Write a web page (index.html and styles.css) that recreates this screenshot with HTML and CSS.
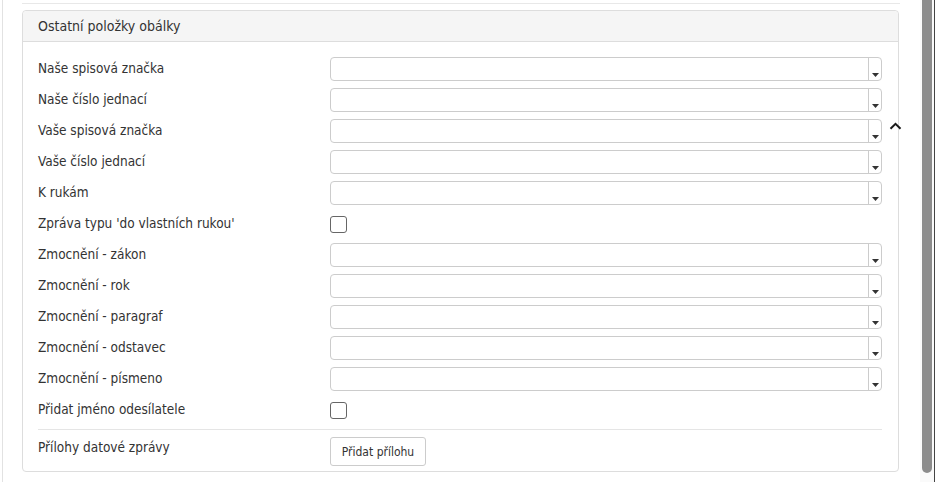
FILE: index.html
```html
<!DOCTYPE html>
<html lang="cs">
  <head>
    <meta charset="utf-8">
    <title>Ostatní položky obálky</title>
    <link rel="stylesheet" href="styles.css">
  </head>
  <body>
    <div class="page">
      <div class="content">
        <div class="top-rule"></div>

        <div class="panel">
          <div class="panel-heading">Ostatní položky obálky</div>
          <div class="panel-body">
            <div class="row">
              <label>Naše spisová značka</label>
              <div class="combo"><span class="combo-input"></span><span class="combo-arrow"><svg width="7" height="4" viewBox="0 0 7 4"><polygon points="0,0 7,0 3.5,4" /></svg></span></div>
            </div>
            <div class="row">
              <label>Naše číslo jednací</label>
              <div class="combo"><span class="combo-input"></span><span class="combo-arrow"><svg width="7" height="4" viewBox="0 0 7 4"><polygon points="0,0 7,0 3.5,4" /></svg></span></div>
            </div>
            <div class="row">
              <label>Vaše spisová značka</label>
              <div class="combo"><span class="combo-input"></span><span class="combo-arrow"><svg width="7" height="4" viewBox="0 0 7 4"><polygon points="0,0 7,0 3.5,4" /></svg></span></div>
            </div>
            <div class="row">
              <label>Vaše číslo jednací</label>
              <div class="combo"><span class="combo-input"></span><span class="combo-arrow"><svg width="7" height="4" viewBox="0 0 7 4"><polygon points="0,0 7,0 3.5,4" /></svg></span></div>
            </div>
            <div class="row">
              <label>K rukám</label>
              <div class="combo"><span class="combo-input"></span><span class="combo-arrow"><svg width="7" height="4" viewBox="0 0 7 4"><polygon points="0,0 7,0 3.5,4" /></svg></span></div>
            </div>
            <div class="row">
              <label>Zpráva typu 'do vlastních rukou'</label>
              <div class="check"></div>
            </div>
            <div class="row">
              <label>Zmocnění - zákon</label>
              <div class="combo"><span class="combo-input"></span><span class="combo-arrow"><svg width="7" height="4" viewBox="0 0 7 4"><polygon points="0,0 7,0 3.5,4" /></svg></span></div>
            </div>
            <div class="row">
              <label>Zmocnění - rok</label>
              <div class="combo"><span class="combo-input"></span><span class="combo-arrow"><svg width="7" height="4" viewBox="0 0 7 4"><polygon points="0,0 7,0 3.5,4" /></svg></span></div>
            </div>
            <div class="row">
              <label>Zmocnění - paragraf</label>
              <div class="combo"><span class="combo-input"></span><span class="combo-arrow"><svg width="7" height="4" viewBox="0 0 7 4"><polygon points="0,0 7,0 3.5,4" /></svg></span></div>
            </div>
            <div class="row">
              <label>Zmocnění - odstavec</label>
              <div class="combo"><span class="combo-input"></span><span class="combo-arrow"><svg width="7" height="4" viewBox="0 0 7 4"><polygon points="0,0 7,0 3.5,4" /></svg></span></div>
            </div>
            <div class="row">
              <label>Zmocnění - písmeno</label>
              <div class="combo"><span class="combo-input"></span><span class="combo-arrow"><svg width="7" height="4" viewBox="0 0 7 4"><polygon points="0,0 7,0 3.5,4" /></svg></span></div>
            </div>
            <div class="row">
              <label>Přidat jméno odesílatele</label>
              <div class="check"></div>
            </div>
            <div class="row row-attach">
              <label>Přílohy datové zprávy</label>
              <button>Přidat přílohu</button>
            </div>
          </div>
        </div>

        <svg class="collapse" width="13" height="9" viewBox="0 0 13 9">
          <polyline points="1.5,7.8 6.5,2.8 11.5,7.8" fill="none" stroke="#1a1a1a" stroke-width="2" />
        </svg>
      </div>
    </div>
    <div class="scrollbar"><div class="thumb"></div></div>
  </body>
</html>
```

FILE: styles.css
```css
html {
  font-family: "DejaVu Sans Condensed", "DejaVu Sans", sans-serif;
  font-size: 13.5px;
  color: #333;
}

body {
  margin: 0;
  display: flex;
  height: 482px;
  overflow: hidden;
  background: #fff;
}

.page {
  flex: 1;
  padding-left: 2px;
}

.content {
  position: relative;
  height: 100%;
  border-left: 1px solid #e2e2e2;
  padding-left: 19px;
  padding-right: 20px;
}

.top-rule {
  height: 3px;
  border-bottom: 1px solid #e8e8e8;
  margin-bottom: 6px;
}

.panel {
  width: 875px;
  border: 1px solid #ddd;
  border-radius: 4px;
}

.panel-heading {
  height: 30px;
  line-height: 30px;
  padding-left: 15px;
  font-size: 14px;
  background: #f5f5f5;
  border-bottom: 1px solid #ddd;
  border-radius: 4px 4px 0 0;
}

.panel-body {
  padding: 15px 15px 5px 15px;
}

.row {
  display: flex;
  align-items: center;
  height: 24px;
  margin-bottom: 7px;
}

.row label {
  width: 292px;
  margin-top: -3px;
}

.combo {
  display: flex;
  width: 552px;
  height: 24px;
  box-sizing: border-box;
  border: 1px solid #ccc;
  border-radius: 4px;
}

.combo-input {
  flex: 1;
}

.combo-arrow {
  width: 12px;
  border-left: 1px solid #ccc;
  display: flex;
  align-items: flex-end;
  justify-content: center;
  padding-bottom: 3px;
}

.combo-arrow svg {
  fill: #333;
}

.check {
  width: 17px;
  height: 17px;
  box-sizing: border-box;
  border: 1px solid #666;
  border-radius: 3px;
}

.row-attach {
  margin: 0;
  height: 29px;
  padding-top: 7px;
  border-top: 1px solid #e5e5e5;
  width: 844px;
  align-items: flex-start;
}

.row-attach label {
  margin-top: 0;
  padding-top: 2px;
}

.row-attach button {
  height: 29px;
  width: 96px;
  font-family: "DejaVu Sans Condensed", "DejaVu Sans", sans-serif;
  font-size: 12px;
  color: #333;
  background: #fff;
  border: 1px solid #ccc;
  border-radius: 3px;
}

.collapse {
  position: absolute;
  left: 886px;
  top: 121px;
}

.scrollbar {
  width: 15px;
  height: 100%;
  background: #fafafa;
  border-right: 1px solid #444;
  box-sizing: border-box;
  padding-left: 2px;
}

.thumb {
  width: 10px;
  height: 473px;
  background: #8c8c8c;
  border-radius: 0 0 5px 5px;
}
```
